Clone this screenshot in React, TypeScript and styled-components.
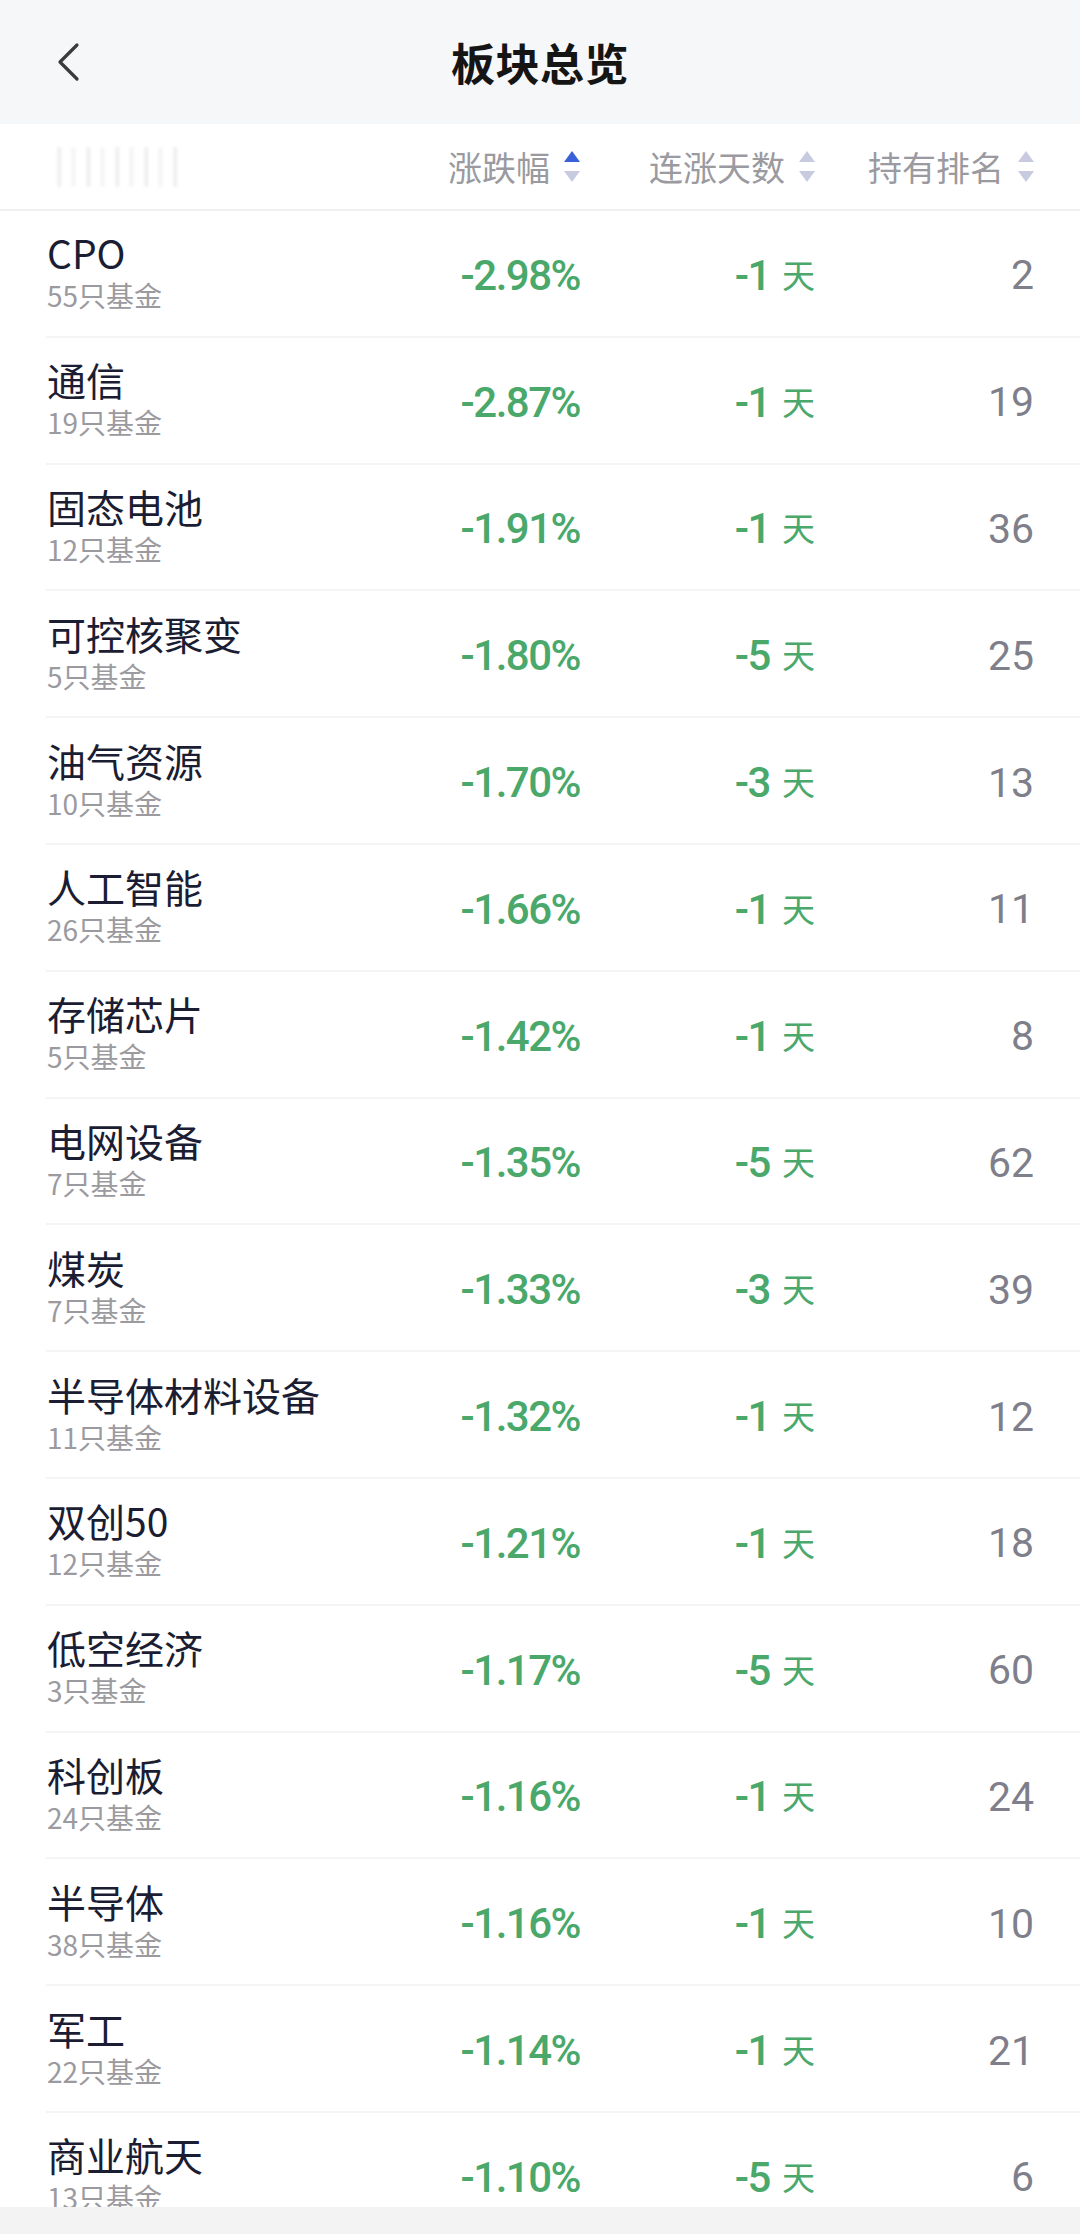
import styled, { createGlobalStyle } from 'styled-components';

const GlobalStyle = createGlobalStyle`
  html, body {
    margin: 0;
    padding: 0;
    background: #ffffff;
    font-family: "Noto Sans CJK SC", "Noto Sans", sans-serif;
  }
  * {
    box-sizing: border-box;
  }
`;

const Page = styled.div`
  height: 100vh;
  display: flex;
  flex-direction: column;
  overflow: hidden;
  background: #ffffff;
`;

const NavBar = styled.header`
  flex: 0 0 124px;
  display: grid;
  grid-template-columns: 120px 1fr 120px;
  align-items: center;
  background: #f6f7f9;
`;

const BackButton = styled.button`
  border: none;
  background: none;
  padding: 0 0 0 56px;
  display: flex;
  align-items: center;
  height: 100%;
`;

const Title = styled.h1`
  margin: 0;
  text-align: center;
  font-size: 44px;
  font-weight: 700;
  color: #151515;
  letter-spacing: 0.5px;
`;

const Columns = `
  display: grid;
  grid-template-columns: 1fr 200px 235px 219px;
  align-items: center;
`;

const TableHead = styled.div`
  ${Columns};
  flex: 0 0 87px;
  padding: 0 46px 0 47px;
  border-bottom: 2px solid #f0f0f2;
`;

const BlurredLabel = styled.div`
  width: 136px;
  height: 40px;
  background: repeating-linear-gradient(
    90deg,
    #ffffff 0px,
    #ffffff 10px,
    #dcdce2 12px,
    #ffffff 15px,
    #ffffff 24px,
    #e8e8ee 26px,
    #ffffff 29px
  );
  filter: blur(1.5px);
  opacity: 0.7;
`;

const HeadCell = styled.div`
  display: flex;
  justify-content: flex-end;
  align-items: center;
  gap: 14px;
  font-size: 34px;
  color: #9a9aa0;
  line-height: 1;
`;

const List = styled.div`
  flex: 1;
  overflow: hidden;
`;

const Row = styled.div`
  ${Columns};
  height: 126.8px;
  margin-left: 46px;
  padding: 0 46px 0 1px;
  border-bottom: 2px solid #f4f4f6;
`;

const NameCell = styled.div`
  display: flex;
  flex-direction: column;
`;

const Name = styled.div`
  font-size: 39px;
  line-height: 44px;
  color: #1b1d33;
`;

const Count = styled.div`
  font-size: 28px;
  line-height: 42px;
  color: #9a9a9f;
`;

const NumCell = styled.div<{ $tone: 'down' | 'rank' }>`
  display: flex;
  justify-content: flex-end;
  align-items: center;
  gap: 12px;
  font-family: Roboto, "Noto Sans CJK SC", sans-serif;
  font-size: ${(p) => (p.$tone === 'down' ? '42px' : '41px')};
  font-weight: ${(p) => (p.$tone === 'down' ? 500 : 400)};
  letter-spacing: ${(p) => (p.$tone === 'down' ? '-1.5px' : '0')};
  color: ${(p) => (p.$tone === 'down' ? '#4aa86b' : '#7f7f8c')};
  padding-top: 4px;
`;

const DayUnit = styled.span`
  font-family: "Noto Sans CJK SC", sans-serif;
  font-size: 33px;
  font-weight: 400;
  letter-spacing: 0;
  line-height: 1;
  padding-bottom: 2px;
`;

const Footer = styled.div`
  flex: 0 0 27px;
  background: #f3f3f4;
`;

const SortIcon = ({ active }: { active?: boolean }) => (
  <svg width="16" height="31" viewBox="0 0 16 31">
    <path d="M8 0 L16 11 L0 11 Z" fill={active ? '#3a60d9' : '#c8cae0'} />
    <path d="M0 20 L16 20 L8 31 Z" fill="#c8cae0" />
  </svg>
);

interface ISector {
  name: string;
  funds: number;
  change: string;
  days: number;
  rank: number;
}

const sectors: ISector[] = [
  { name: 'CPO', funds: 55, change: '-2.98%', days: -1, rank: 2 },
  { name: '通信', funds: 19, change: '-2.87%', days: -1, rank: 19 },
  { name: '固态电池', funds: 12, change: '-1.91%', days: -1, rank: 36 },
  { name: '可控核聚变', funds: 5, change: '-1.80%', days: -5, rank: 25 },
  { name: '油气资源', funds: 10, change: '-1.70%', days: -3, rank: 13 },
  { name: '人工智能', funds: 26, change: '-1.66%', days: -1, rank: 11 },
  { name: '存储芯片', funds: 5, change: '-1.42%', days: -1, rank: 8 },
  { name: '电网设备', funds: 7, change: '-1.35%', days: -5, rank: 62 },
  { name: '煤炭', funds: 7, change: '-1.33%', days: -3, rank: 39 },
  { name: '半导体材料设备', funds: 11, change: '-1.32%', days: -1, rank: 12 },
  { name: '双创50', funds: 12, change: '-1.21%', days: -1, rank: 18 },
  { name: '低空经济', funds: 3, change: '-1.17%', days: -5, rank: 60 },
  { name: '科创板', funds: 24, change: '-1.16%', days: -1, rank: 24 },
  { name: '半导体', funds: 38, change: '-1.16%', days: -1, rank: 10 },
  { name: '军工', funds: 22, change: '-1.14%', days: -1, rank: 21 },
  { name: '商业航天', funds: 13, change: '-1.10%', days: -5, rank: 6 },
];

const App = () => {
  return (
    <Page>
      <GlobalStyle />
      <NavBar>
        <BackButton aria-label="back">
          <svg width="26" height="40" viewBox="0 0 26 40">
            <path
              d="M21 3 L4 20 L21 37"
              fill="none"
              stroke="#3a3a3a"
              strokeWidth="3.2"
              strokeLinecap="round"
              strokeLinejoin="round"
            />
          </svg>
        </BackButton>
        <Title>板块总览</Title>
        <div />
      </NavBar>
      <TableHead>
        <BlurredLabel />
        <HeadCell>
          涨跌幅
          <SortIcon active />
        </HeadCell>
        <HeadCell>
          连涨天数
          <SortIcon />
        </HeadCell>
        <HeadCell>
          持有排名
          <SortIcon />
        </HeadCell>
      </TableHead>
      <List>
        {sectors.map((s) => (
          <Row key={s.name}>
            <NameCell>
              <Name>{s.name}</Name>
              <Count>{s.funds}只基金</Count>
            </NameCell>
            <NumCell $tone="down">{s.change}</NumCell>
            <NumCell $tone="down">
              {s.days}
              <DayUnit>天</DayUnit>
            </NumCell>
            <NumCell $tone="rank">{s.rank}</NumCell>
          </Row>
        ))}
      </List>
      <Footer />
    </Page>
  );
};

export default App;
